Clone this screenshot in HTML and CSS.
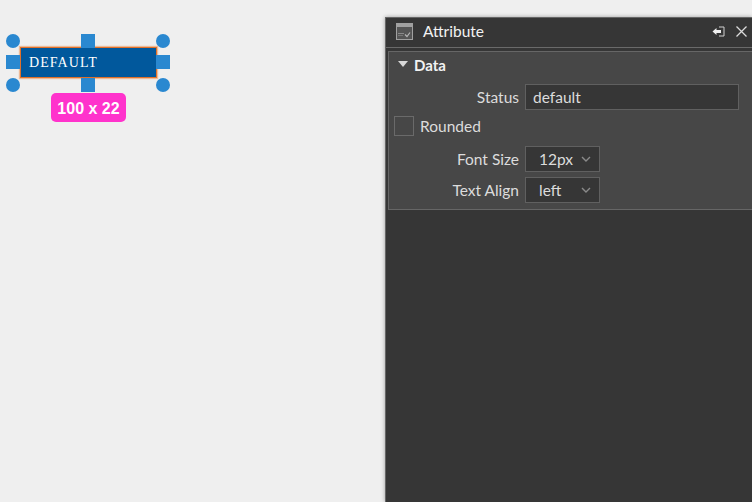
FILE: index.html
```html
<!DOCTYPE html>
<html lang="en">
<head>
<meta charset="utf-8">
<title>Attribute</title>
<link rel="stylesheet" href="styles.css">
</head>
<body>
<div class="widget">
  <span class="widget-text">DEFAULT</span>
</div>
<span class="handle round h-tl"></span>
<span class="handle round h-tr"></span>
<span class="handle round h-bl"></span>
<span class="handle round h-br"></span>
<span class="handle h-t"></span>
<span class="handle h-b"></span>
<span class="handle h-l"></span>
<span class="handle h-r"></span>
<div class="size-badge">100 x 22</div>

<section class="panel">
  <header class="titlebar">
    <svg class="title-icon" width="17" height="17" viewBox="0 0 17 17">
      <rect x="0" y="0" width="17" height="17" fill="#a0a0a0"/>
      <rect x="1" y="4" width="15" height="12" fill="#555"/>
      <rect x="2" y="10" width="6" height="1" fill="#8a8a8a"/>
      <rect x="2" y="12" width="5" height="1" fill="#777"/>
      <path d="M9 11.5l2 2 3-4" fill="none" stroke="#b5b5b5" stroke-width="1.2"/>
    </svg>
    <span class="title">Attribute</span>
    <svg class="btn-dock" width="13" height="11" viewBox="0 0 13 11">
      <path d="M7 1h5v9H7" fill="none" stroke="#d0d0d0" stroke-width="1"/>
      <path d="M0.5 5.5L4.5 2v2H9v3H4.5v2z" fill="#f0f0f0"/>
    </svg>
    <svg class="btn-close" width="11" height="11" viewBox="0 0 11 11">
      <path d="M0.5 0.5l10 10M10.5 0.5l-10 10" stroke="#dcdcdc" stroke-width="1.3"/>
    </svg>
  </header>
  <div class="group">
    <div class="group-head">
      <svg class="caret" width="10" height="6" viewBox="0 0 10 6"><path d="M0 0h10L5 6z" fill="#d8d8d8"/></svg>
      <span>Data</span>
    </div>
    <div class="row row-status">
      <label class="label">Status</label>
      <div class="input input-wide">default</div>
    </div>
    <div class="check-row">
      <span class="checkbox"></span>
      <label class="check-label">Rounded</label>
    </div>
    <div class="row row-font">
      <label class="label">Font Size</label>
      <div class="input select"><span>12px</span>
        <svg width="10" height="6" viewBox="0 0 10 6"><path d="M1 1l4 4 4-4" fill="none" stroke="#8a8a8a" stroke-width="1.4"/></svg>
      </div>
    </div>
    <div class="row row-align">
      <label class="label">Text Align</label>
      <div class="input select"><span>left</span>
        <svg width="10" height="6" viewBox="0 0 10 6"><path d="M1 1l4 4 4-4" fill="none" stroke="#8a8a8a" stroke-width="1.4"/></svg>
      </div>
    </div>
  </div>
</section>
</body>
</html>
```
FILE: styles.css
```css
html, body { margin: 0; height: 100%; overflow: hidden; }
body { position: relative; background: #efefef; font-family: "Lato", sans-serif; }

.widget {
  position: absolute; left: 20px; top: 47px; width: 135px; height: 29px;
  display: flex; align-items: center;
  background: #01589c; border: 1px solid #e0702a;
  box-shadow: 0 0 1px 1px rgba(235,150,90,.6);
}
.widget-text { margin: 1px 0 0 8px; font: 14px/1 "Liberation Serif", serif; color: #fff; letter-spacing: 1.05px; }
.handle { position: absolute; width: 14px; height: 14px; background: #2a88d0; }
.round { border-radius: 50%; }
.h-tl { left: 6px; top: 34px; } .h-tr { left: 156px; top: 34px; }
.h-bl { left: 6px; top: 78px; } .h-br { left: 156px; top: 78px; }
.h-t { left: 81px; top: 34px; } .h-b { left: 81px; top: 78px; }
.h-l { left: 6px; top: 55px; } .h-r { left: 156px; top: 55px; }
.size-badge {
  position: absolute; left: 51px; top: 93px; width: 75px; height: 29px; padding-top: 2px; box-sizing: border-box;
  display: flex; align-items: center; justify-content: center;
  background: #ff33cc; border-radius: 5px; color: #fff;
  font: bold 16px "Liberation Sans", sans-serif;
}

.panel {
  position: absolute; left: 385px; top: 17px; right: 0; bottom: 0;
  background: #363636; border: 1px solid #666; border-right: 0; border-bottom: 0;
  box-shadow: 0 0 4px rgba(0,0,0,.35);
  color: #dcdcdc; font-size: 15.5px;
}
.titlebar { display: flex; align-items: center; height: 29px; padding: 0 5px 0 10px; border-bottom: 1px solid #6a6a6a; }
.title { margin: -4px 0 0 10px; flex: 1; color: #f2f2f2; font-size: 15.5px; }
.title-icon { margin-top: -2px; }
.btn-dock, .btn-close { margin-top: -2px; }
.btn-close { margin-left: 11px; }
.group { margin: 3px 0 0 2px; height: 159px; background: #474747; border: 1px solid #666; border-right: 0; box-sizing: border-box; }
.group-head { display: flex; align-items: center; gap: 6px; height: 26px; padding: 0 0 0 9px; font-weight: 700; color: #f2f2f2; font-size: 15px; }
.caret { margin-top: -3px; }
.row { display: flex; align-items: center; height: 26px; }
.row-status { margin-top: 6px; }
.label { width: 130px; margin-right: 6px; text-align: right; }
.input { box-sizing: border-box; height: 26px; line-height: 24px; background: #363636; border: 1px solid #606060; padding-left: 7px; }
.input-wide { width: 214px; }
.select { width: 75px; padding: 0 8px 0 13px; display: flex; align-items: center; justify-content: space-between; }
.check-row { display: flex; align-items: center; gap: 6px; margin: 3px 0 0 5px; height: 26px; }
.checkbox { box-sizing: border-box; width: 20px; height: 20px; border: 1px solid #6a6a6a; }
.row-font { margin-top: 7px; }
.row-align { margin-top: 5px; }
```
